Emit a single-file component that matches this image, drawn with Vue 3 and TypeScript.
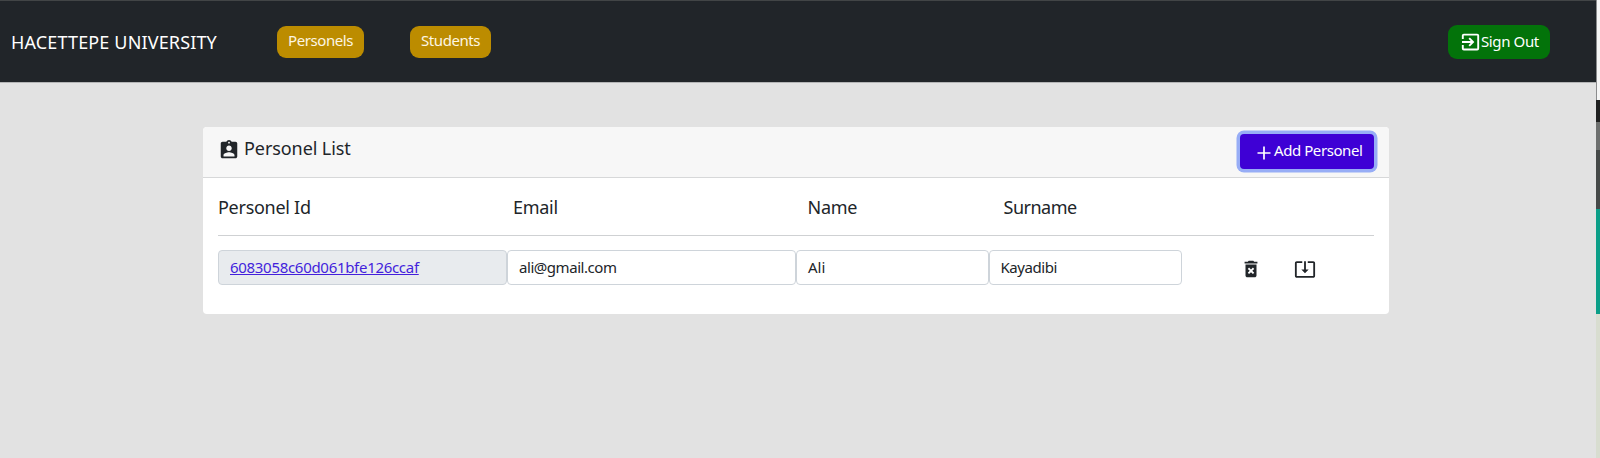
<script setup lang="ts">
interface Personel {
  id: string
  email: string
  name: string
  surname: string
}

const columns = ['Personel Id', 'Email', 'Name', 'Surname']
const personels: Personel[] = [
  { id: '6083058c60d061bfe126ccaf', email: 'ali@gmail.com', name: 'Ali', surname: 'Kayadibi' },
]
</script>

<template>
  <div class="screen">
    <div class="page">
      <header class="navbar">
        <span class="brand">HACETTEPE UNIVERSITY</span>
        <nav class="links">
          <a class="pill personels">Personels</a>
          <a class="pill students">Students</a>
        </nav>
        <button class="signout">
          <svg viewBox="0 0 20 20" width="20" height="20" fill="none" stroke="currentColor" stroke-width="1.900"><path d="M2.800 7V3.600a1 1 0 0 1 1-1h13.400a1 1 0 0 1 1 1v12.900a1 1 0 0 1-1 1H3.800a1 1 0 0 1-1-1V13M2 10h10.600M9.200 6.200 13 10l-3.800 3.800" /></svg>
          <span>Sign Out</span>
        </button>
      </header>

      <main class="card">
        <div class="card-head">
          <h1 class="title">
            <svg viewBox="0 0 24 24" width="22" height="22" fill="currentColor"><path d="M19 3h-4.180C14.400 1.840 13.300 1 12 1c-1.300 0-2.400.840-2.820 2H5c-1.100 0-2 .900-2 2v14c0 1.100.900 2 2 2h14c1.100 0 2-.900 2-2V5c0-1.100-.900-2-2-2zm-7 0c.550 0 1 .450 1 1s-.450 1-1 1-1-.450-1-1 .450-1 1-1zm0 4c1.660 0 3 1.340 3 3s-1.340 3-3 3-3-1.340-3-3 1.340-3 3-3zm6 12H6v-1.400c0-2 4-3.100 6-3.100s6 1.100 6 3.100V19z" /></svg>
            <span>Personel List</span>
          </h1>
          <button class="add">
            <svg viewBox="0 0 14 14" width="14" height="14"><path d="M7 .5v13M.5 7h13" fill="none" stroke="currentColor" stroke-width="1.700" /></svg>
            <span>Add Personel</span>
          </button>
        </div>
        <div class="card-body">
          <div class="grid heads">
            <span v-for="(c, i) in columns" :key="c" :class="'h' + i">{{ c }}</span>
          </div>
          <div v-for="p in personels" :key="p.id" class="grid row">
            <div class="field disabled"><a class="id">{{ p.id }}</a></div>
            <div class="field"><span class="email">{{ p.email }}</span></div>
            <div class="field"><span class="name">{{ p.name }}</span></div>
            <div class="field"><span class="surname">{{ p.surname }}</span></div>
            <div class="actions">
              <svg viewBox="0 0 24 24" width="22" height="22" fill="currentColor"><path d="M6 19c0 1.100.900 2 2 2h8c1.100 0 2-.900 2-2V7H6v12zm2.460-7.120 1.410-1.410L12 12.590l2.120-2.120 1.410 1.410L13.410 14l2.120 2.120-1.410 1.410L12 15.410l-2.120 2.120-1.410-1.410L10.590 14l-2.130-2.120zM15.500 4l-1-1h-5l-1 1H5v2h14V4z" /></svg>
              <svg viewBox="0 0 24 24" width="22" height="22" fill="currentColor"><path d="m12 16.500 4-4h-3v-9h-2v9H8l4 4zm9-13h-6v1.990h6v14.030H3V5.490h6V3.500H3c-1.100 0-2 .900-2 2v14c0 1.100.900 2 2 2h18c1.100 0 2-.900 2-2v-14c0-1.100-.900-2-2-2z" /></svg>
            </div>
          </div>
        </div>
      </main>
    </div>
    <aside class="edge">
      <i class="e1" /><i class="e2" /><i class="e3" /><i class="e4" /><i class="e5" /><i class="e6" />
    </aside>
  </div>
</template>

<style>
html, body { margin: 0; overflow: hidden; }
</style>

<style scoped>
* { box-sizing: border-box; }
.screen {
  display: flex;
  width: 1600px;
  height: 458px;
  background: #e2e2e2;
  color: #212529;
  font-family: "Noto Sans", sans-serif;
  font-size: 15px;
  line-height: 22px;
  white-space: nowrap;
}
.page { width: 1596px; height: 458px; }
svg { display: block; flex: none; }
button { border: 0; margin: 0; font: inherit; color: #fff; }
.navbar {
  display: flex;
  align-items: center;
  height: 82px;
  padding: 0 46px 0 11px;
  background: #212529;
  border-top: 1px solid #424546;
  box-shadow: 0 1px 0 #b4b5b6;
}
.brand { width: 266px; color: #fff; font-size: 18px; line-height: 26px; padding-top: 1px; letter-spacing: 0.15px; }
.links { display: flex; gap: 46px; }
.pill {
  height: 32px;
  padding: 3px 0 0 11px;
  border-radius: 9px;
  background: #bc8c00;
  color: #fdf6e3;
  letter-spacing: -0.42px;
}
.personels { width: 87px; }
.students { width: 81px; }
.signout {
  display: flex;
  align-items: center;
  width: 102px;
  height: 34px;
  margin-left: auto;
  padding: 0 0 0 12px;
  border-radius: 9px;
  background: #03730a;
  letter-spacing: -0.38px;
}
.signout span { margin: -2px 0 0 1px; }
.card {
  width: 1186px;
  height: 187px;
  margin: 45px 0 0 203px;
  border-radius: 4px;
  background: #fff;
  overflow: hidden;
}
.card-head {
  display: flex;
  justify-content: space-between;
  height: 51px;
  padding: 7px 15px 0;
  background: #f7f7f7;
  border-bottom: 1px solid #d7d8d9;
}
.title { display: flex; align-items: flex-start; margin: 0; font-size: 18px; font-weight: 400; line-height: 26px; letter-spacing: -0.08px; }
.title svg { margin: 5px 4px 0 0; }
.title span { padding-top: 1px; }
.add {
  display: flex;
  align-items: center;
  width: 134px;
  height: 35px;
  padding: 0 0 0 17px;
  border-radius: 4px;
  background: #3e00d5;
  box-shadow: 0 0 0 3.500px #97adf6;
  letter-spacing: -0.43px;
}
.add svg { margin-top: 3px; }
.add span { margin: -3px 0 0 3px; }
.card-body { padding: 0 15px; }
.grid { display: grid; grid-template-columns: 289px 289px 192.500px 193px 1fr; }
.heads { height: 58px; padding-top: 16px; font-size: 18px; line-height: 26px; letter-spacing: -0.28px; border-bottom: 1px solid #cfd1d3; }
.h1 { padding-left: 6px; }
.h2 { padding-left: 11.500px; }
.h3 { padding-left: 15px; letter-spacing: -0.5px; }
.row { margin-top: 14px; }
.field { height: 35px; padding: 5px 11px; border: 1px solid #ced4da; border-radius: 4px; }
.disabled { background: #e8ebee; }
.id { color: #431fdc; text-decoration: underline; letter-spacing: -0.3px; }
.email, .surname { letter-spacing: -0.45px; }
.actions { display: flex; gap: 32px; padding: 8px 0 0 58.500px; }
.edge { display: flex; flex-direction: column; width: 4px; }
.e1 { height: 100px; background: #f5f5f5; border-left: 1px solid #8b8c8d; }
.e2 { height: 22px; background: #1f2020; }
.e3 { height: 28px; background: #6d6f6e; }
.e4 { height: 59px; background: #454948; }
.e5 { height: 105px; background: #0b9e88; }
.e6 { height: 144px; background: #d8ddd0; }
</style>
